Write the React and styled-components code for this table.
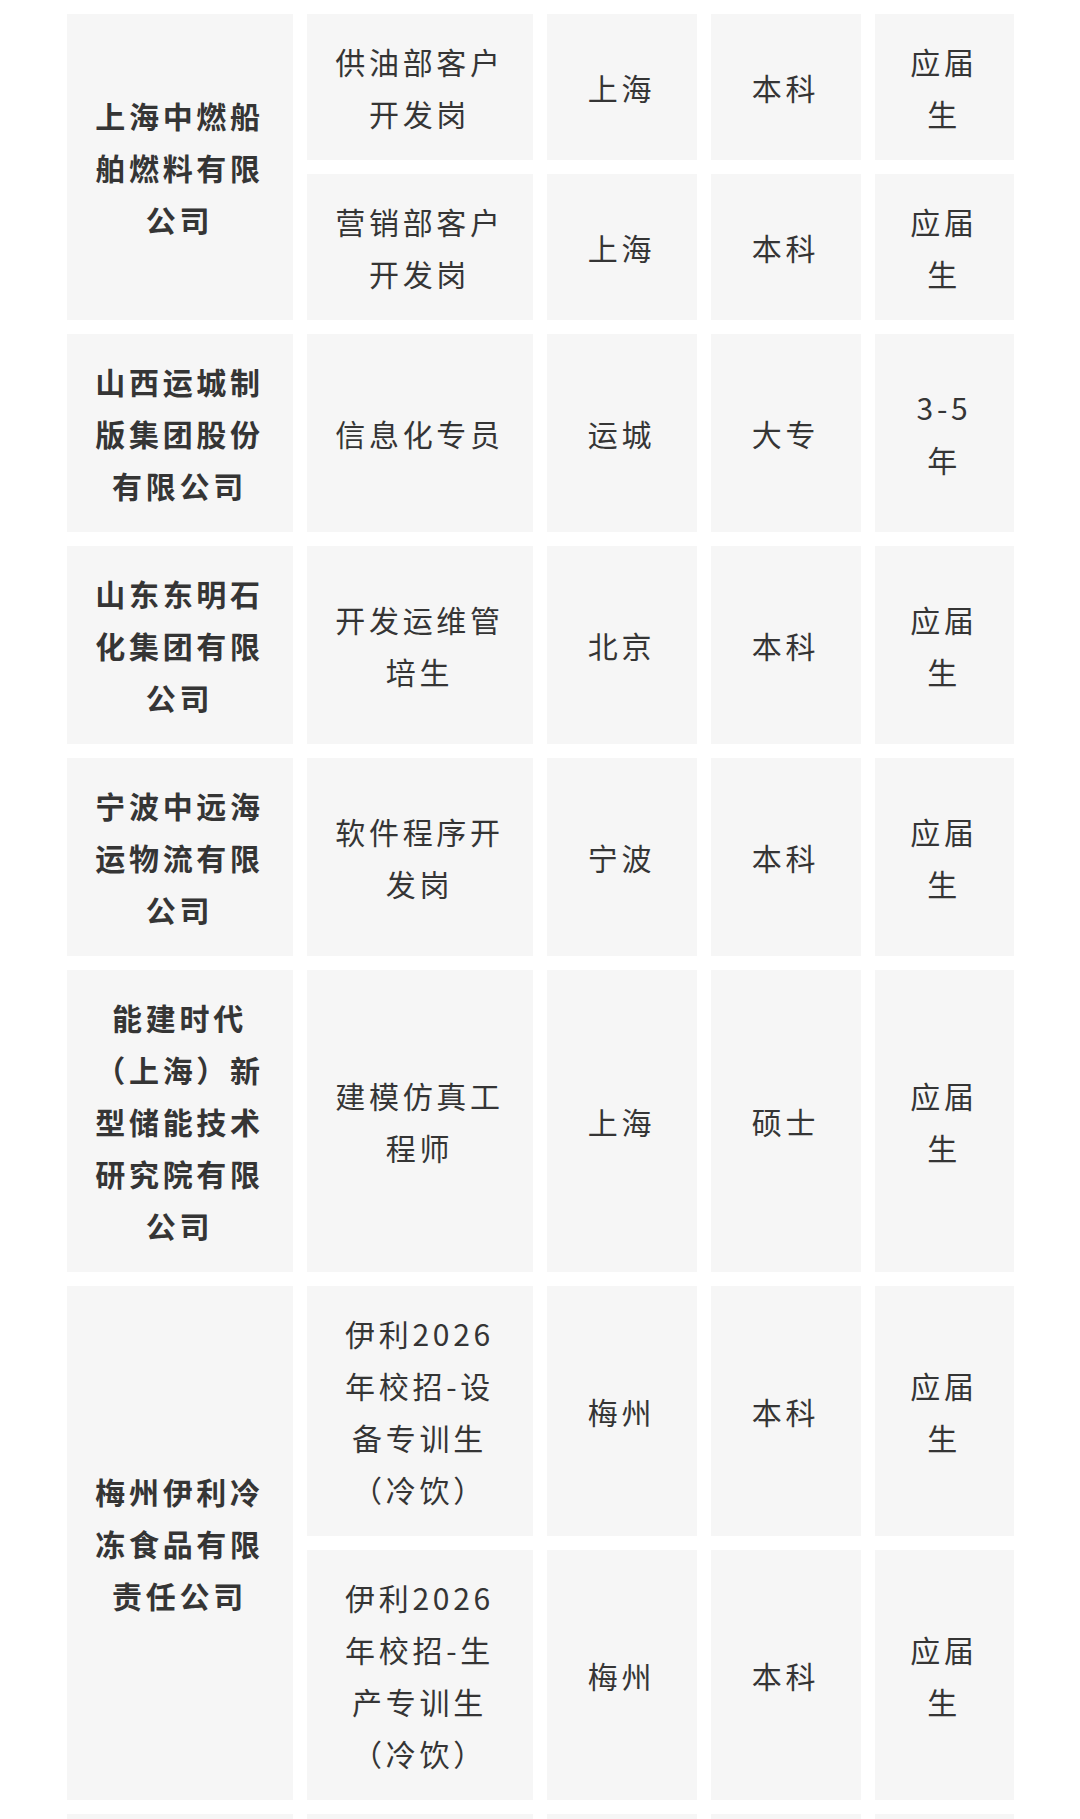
import React from 'react';
import styled, { createGlobalStyle } from 'styled-components';

const GlobalStyle = createGlobalStyle`
  html, body {
    margin: 0;
    padding: 0;
    background: #ffffff;
  }
  body {
    font-family: "Noto Sans CJK SC", "Noto Sans", sans-serif;
  }
`;

const Page = styled.div`
  width: 1080px;
  overflow: hidden;
`;

const Table = styled.table`
  margin: 0 auto;
  table-layout: fixed;
  border-collapse: separate;
  border-spacing: 14px;
`;

const Cell = styled.td`
  background: #f6f6f6;
  padding: 21px ${(p) => p.$padX || 25}px;
  vertical-align: middle;
  text-align: center;
  font-size: 30px;
  line-height: 52px;
  letter-spacing: 3.7px;
  color: #353535;
  font-weight: ${(p) => (p.$bold ? 700 : 400)};
  height: ${(p) => (p.$h ? `${p.$h}px` : 'auto')};
`;

const colWidths = [226, 226, 150, 150, 139];
const colPad = [25, 25, 25, 25, 30];

const groups = [
  {
    company: '上海中燃船舶燃料有限公司',
    jobs: [
      ['供油部客户开发岗', '上海', '本科', '应届生'],
      ['营销部客户开发岗', '上海', '本科', '应届生'],
    ],
  },
  { company: '山西运城制版集团股份有限公司', jobs: [['信息化专员', '运城', '大专', '3-5年']] },
  { company: '山东东明石化集团有限公司', jobs: [['开发运维管培生', '北京', '本科', '应届生']] },
  { company: '宁波中远海运物流有限公司', jobs: [['软件程序开发岗', '宁波', '本科', '应届生']] },
  { company: '能建时代（上海）新型储能技术研究院有限公司', jobs: [['建模仿真工程师', '上海', '硕士', '应届生']] },
  {
    company: '梅州伊利冷冻食品有限责任公司',
    jobs: [
      ['伊利2026年校招-设备专训生（冷饮）', '梅州', '本科', '应届生'],
      ['伊利2026年校招-生产专训生（冷饮）', '梅州', '本科', '应届生'],
    ],
  },
];

const App = () => {
  return (
    <Page>
      <GlobalStyle />
      <Table>
        <colgroup>
          {colWidths.map((w, i) => (
            <col key={i} style={{ width: w }} />
          ))}
        </colgroup>
        <tbody>
          {groups.map((g, gi) =>
            g.jobs.map((job, ji) => (
              <tr key={`${gi}-${ji}`}>
                {ji === 0 && (
                  <Cell $bold rowSpan={g.jobs.length}>
                    {g.company}
                  </Cell>
                )}
                {job.map((t, ti) => (
                  <Cell key={ti} $padX={colPad[ti + 1]}>
                    {t}
                  </Cell>
                ))}
              </tr>
            ))
          )}
          <tr>
            {colWidths.map((_, i) => (
              <Cell key={i} $bold={i === 0} $h={150} />
            ))}
          </tr>
        </tbody>
      </Table>
    </Page>
  );
};

export default App;
